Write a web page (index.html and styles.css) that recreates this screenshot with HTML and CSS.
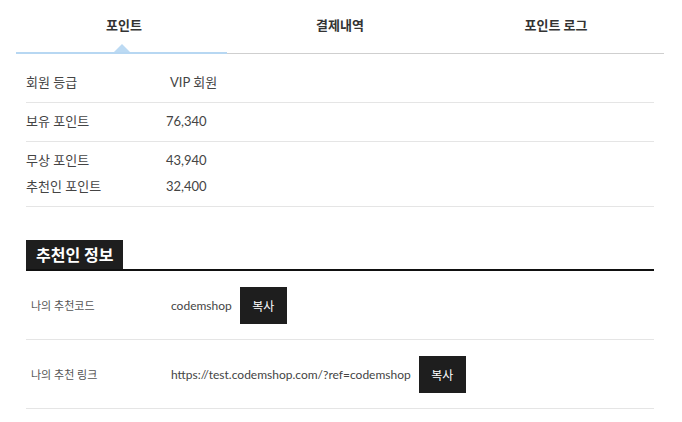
FILE: index.html
```html
<!DOCTYPE html>
<html lang="ko">
<head>
    <meta charset="UTF-8">
    <meta name="viewport" content="width=device-width, initial-scale=1.0">
    <title>포인트</title>
    <link rel="stylesheet" href="styles.css">
</head>
<body>
    <div class="wrap">
        <ul class="tabs">
            <li class="tab active">포인트</li>
            <li class="tab">결제내역</li>
            <li class="tab">포인트 로그</li>
        </ul>

        <div class="point-box">
            <div class="point-row">
                <div class="line"><span class="label">회원 등급</span><span class="value grade">VIP 회원</span></div>
            </div>
            <div class="point-row">
                <div class="line"><span class="label">보유 포인트</span><span class="value">76,340</span></div>
            </div>
            <div class="point-row">
                <div class="line"><span class="label">무상 포인트</span><span class="value">43,940</span></div>
                <div class="line"><span class="label">추천인 포인트</span><span class="value">32,400</span></div>
            </div>
        </div>

        <div class="section-title"><h3>추천인 정보</h3></div>
        <div class="ref-box">
            <div class="ref-row">
                <span class="ref-label">나의 추천코드</span>
                <span class="ref-value">codemshop</span>
                <button class="copy-btn">복사</button>
            </div>
            <div class="ref-row">
                <span class="ref-label">나의 추천 링크</span>
                <span class="ref-value">https://test.codemshop.com/?ref=codemshop</span>
                <button class="copy-btn">복사</button>
            </div>
        </div>
    </div>
</body>
</html>
```

FILE: styles.css
```css
body {
    margin: 0;
    font-family: Lato, "Noto Sans CJK KR", sans-serif;
    color: #444;
    background: #fff;
}
.wrap {
    padding: 0 18px 0 16px;
}
.tabs {
    list-style: none;
    margin: 0;
    padding: 0;
    display: flex;
    border-bottom: 1px solid #cfcfcf;
}
.tab {
    flex: 1;
    text-align: center;
    font-size: 13px;
    font-weight: 600;
    color: #333;
    height: 53px;
    line-height: 51px;
    box-sizing: border-box;
    position: relative;
}
/* active tab: light blue underline with a small arrow */
.tab.active::after {
    content: "";
    position: absolute;
    left: 0;
    right: 5px;
    bottom: -1px;
    height: 2px;
    background: #b7d7f2;
}
.tab.active::before {
    content: "";
    position: absolute;
    left: 50%;
    bottom: 0;
    margin-left: -11px;
    border-left: 9px solid transparent;
    border-right: 9px solid transparent;
    border-bottom: 9px solid #bcdaf3;
}
.point-box {
    padding: 10px 10px 0;
}
.point-row {
    border-bottom: 1px solid #e5e5e5;
    padding: 5px 0 7px;
}
.line {
    display: flex;
    font-size: 13px;
    line-height: 26px;
    color: #444;
}
.label {
    width: 140px;
}
.grade {
    padding-left: 4px;
}
.section-title {
    margin: 33px 10px 0;
    border-bottom: 2px solid #111;
    display: flex;
}
.section-title h3 {
    margin: 0;
    background: #1e1e1e;
    color: #fff;
    font-size: 16px;
    font-weight: bold;
    line-height: 29px;
    padding: 0 9px 0 10px;
}
.ref-box {
    margin: 0 10px;
}
.ref-row {
    display: flex;
    align-items: center;
    height: 68px;
    border-bottom: 1px solid #e5e5e5;
    padding-left: 5px;
}
.ref-label {
    width: 140px;
    font-size: 11px;
    color: #555;
}
.ref-value {
    font-size: 12px;
    color: #444;
    margin-right: 8px;
}
.copy-btn {
    background: #1e1e1e;
    color: #fff;
    border: none;
    width: 47px;
    height: 37px;
    font-size: 12px;
    font-family: inherit;
    padding: 0;
    cursor: pointer;
}
```
